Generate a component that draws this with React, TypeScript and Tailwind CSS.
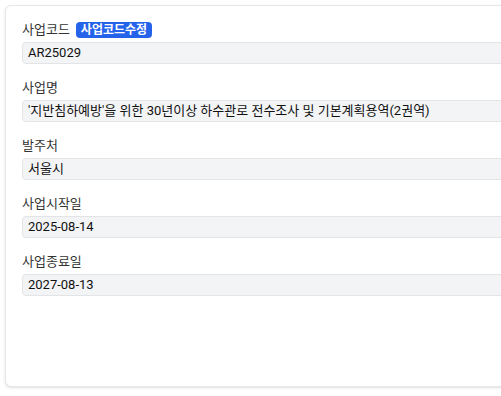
import React from "react";

interface FieldProps {
  label: string;
  value: string;
  badge?: string;
}

const Field: React.FC<FieldProps> = ({ label, value, badge }) => {
  return (
    <div className="flex flex-col">
      <div className="flex items-center h-5 mb-0.5">
        <span className="text-[13px] leading-5 text-[#333]">{label}</span>
        {badge && (
          <span className="ml-1.5 px-[5px] h-4 leading-4 rounded-[4px] bg-[#2563eb] text-white text-[12px] font-semibold">
            {badge}
          </span>
        )}
      </div>
      <div className="h-[22px] flex items-center px-[5px] bg-[#f3f4f6] border border-[#e2e4e8] rounded-[4px] text-[13px] text-[#111] whitespace-nowrap">
        {value}
      </div>
    </div>
  );
};

const fields: FieldProps[] = [
  { label: "사업코드", value: "AR25029", badge: "사업코드수정" },
  {
    label: "사업명",
    value: "'지반침하예방'을 위한 30년이상 하수관로 전수조사 및 기본계획용역(2권역)",
  },
  { label: "발주처", value: "서울시" },
  { label: "사업시작일", value: "2025-08-14" },
  { label: "사업종료일", value: "2027-08-13" },
];

export default function App() {
  return (
    <div
      className="w-[501px] h-[396px] overflow-hidden bg-white"
      style={{ fontFamily: "Roboto, 'Noto Sans CJK KR', sans-serif" }}
    >
      <div className="ml-[5px] mt-[5px] w-[600px] h-[382px] bg-white border border-[#e5e7eb] rounded-md shadow-sm pl-4 pr-4 pt-[14px]">
        <div className="flex flex-col gap-[14px]">
          {fields.map((f) => (
            <Field key={f.label} {...f} />
          ))}
        </div>
      </div>
    </div>
  );
}
